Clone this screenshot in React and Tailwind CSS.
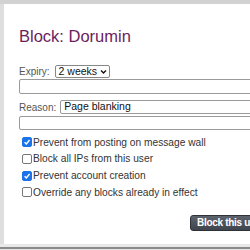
import { useState } from 'react';

const options = [
  { id: 'wall', label: 'Prevent from posting on message wall', checked: true },
  { id: 'ips', label: 'Block all IPs from this user', checked: false },
  { id: 'account', label: 'Prevent account creation', checked: true },
  { id: 'override', label: 'Override any blocks already in effect', checked: false },
];

const Check = ({ checked, onChange }) => (
  <button
    onClick={onChange}
    className={`w-[10px] h-[10px] rounded-[2px] border flex items-center justify-center shrink-0 ${
      checked ? 'bg-[#1a73e8] border-[#1a73e8]' : 'bg-white border-[#777]'
    }`}
  >
    {checked && (
      <svg viewBox="0 0 10 10" className="w-[8px] h-[8px]">
        <path d="M2 5.2 L4.2 7.4 L8.2 2.6" fill="none" stroke="white" strokeWidth="1.8" />
      </svg>
    )}
  </button>
);

export default function App() {
  const [checks, setChecks] = useState(options.map((o) => o.checked));

  return (
    <div
      className="w-[250px] h-[250px] bg-[#e4e4e4] overflow-hidden flex flex-col"
      style={{ fontFamily: '"Liberation Sans", Arial, sans-serif' }}
    >
      <div className="h-[4px] bg-[#d2d2d2] shrink-0" />
      <div className="flex flex-1">
        <div className="w-[4px] bg-[#dedede] shrink-0" />
        <div className="flex-1 bg-white pl-[15px] pt-[22px] flex flex-col">
          {/* Title */}
          <h1 className="text-[16.5px] leading-[20px] text-[#6b1e5e] whitespace-nowrap">Block: Dorumin</h1>

          {/* Expiry */}
          <div className="mt-[18px] flex items-center h-[15px] text-[10px] text-[#555]">
            <span>Expiry:</span>
            <div className="ml-[5px] h-[13px] pl-[3px] pr-[2px] border border-[#888] rounded-[2px] flex items-center gap-[3px] text-[10.5px] text-[#111]">
              <span>2 weeks</span>
              <svg viewBox="0 0 10 10" className="w-[7px] h-[7px]">
                <path d="M1.5 3.5 L5 7 L8.5 3.5" fill="none" stroke="#111" strokeWidth="2" />
              </svg>
            </div>
          </div>
          <div className="mt-[0px] h-[15px] w-[260px] border border-[#9a9a9a] rounded-[2px]" />

          {/* Reason */}
          <div className="mt-[6px] flex items-center h-[14px] text-[10px] text-[#555]">
            <span>Reason:</span>
            <div className="ml-[4px] h-[14px] w-[220px] border border-[#9a9a9a] rounded-[2px] pl-[3px] flex items-center text-[10.5px] text-[#111] whitespace-nowrap">
              Page blanking
            </div>
          </div>
          <div className="mt-[2px] h-[14px] w-[260px] border border-[#9a9a9a] rounded-[2px]" />

          {/* Options */}
          <div className="mt-[4px] flex flex-col pl-[3px]">
            {options.map((o, i) => (
              <label key={o.id} className="h-[16.7px] flex items-center gap-[1px] text-[10.2px] text-[#333] whitespace-nowrap">
                <Check
                  checked={checks[i]}
                  onChange={() => setChecks(checks.map((c, j) => (j === i ? !c : c)))}
                />
                <span>{o.label}</span>
              </label>
            ))}
          </div>

          {/* Submit */}
          <div className="mt-[14px] flex">
            <button className="ml-[171px] h-[16px] pl-[6px] pr-[6px] rounded-[3px] bg-gradient-to-b from-[#5c636d] to-[#3f454d] border border-[#2e3238] text-white text-[10px] font-semibold tracking-[-0.3px] whitespace-nowrap shrink-0 flex items-center">
              Block this user
            </button>
          </div>
        </div>
      </div>
      <div className="h-[3px] bg-[#e8e8e8] shrink-0" />
      <div className="h-[2px] bg-[#8a8a8a] shrink-0" />
      <div className="h-[1px] bg-[#e4e4e4] shrink-0" />
    </div>
  );
}
